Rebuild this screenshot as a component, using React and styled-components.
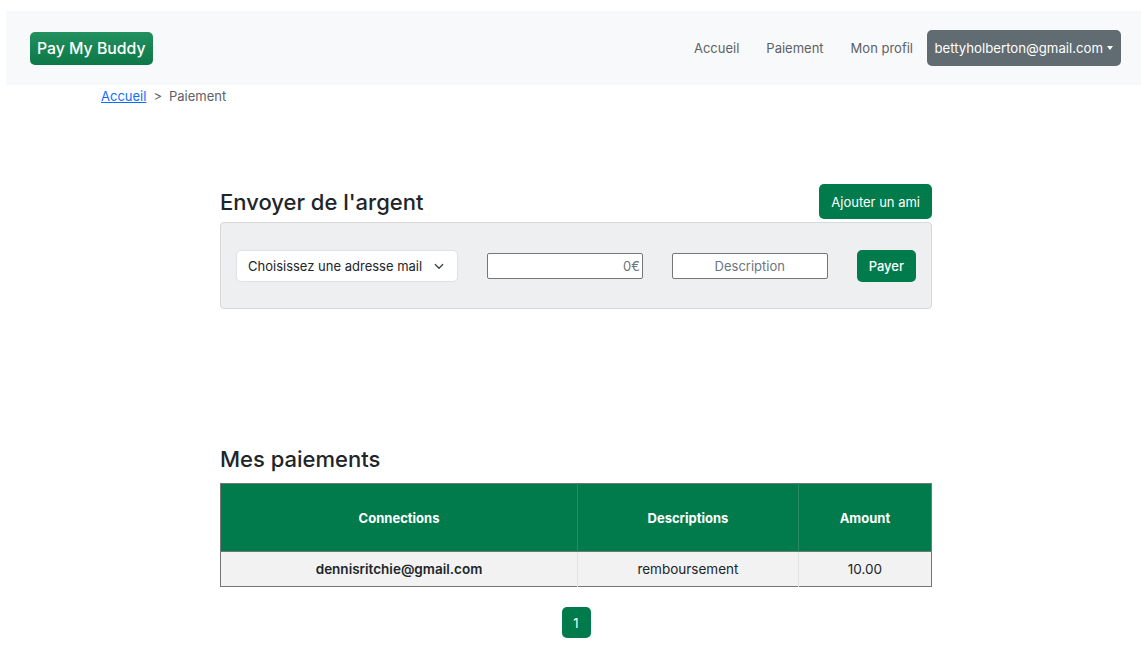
import React from 'react';
import styled, { createGlobalStyle } from 'styled-components';

const GlobalStyle = createGlobalStyle`
  body {
    margin: 0;
    background: #fff;
    font-family: Inter, "Liberation Sans", Arial, sans-serif;
    color: #212529;
  }
`;

const Page = styled.div`
  padding: 11px 0 0 6px;
`;

const Navbar = styled.nav`
  display: flex;
  align-items: center;
  justify-content: space-between;
  height: 74px;
  padding: 0 20px 0 24px;
  background-color: #f8f9fa;
`;

const Brand = styled.a`
  display: flex;
  align-items: center;
  height: 33px;
  padding: 0 7px;
  border-radius: 5px;
  background: linear-gradient(#23905f, #0d7848);
  color: #fff;
  font-size: 15.8px;
  font-weight: 500;
  text-decoration: none;
`;

const NavLinks = styled.div`
  display: flex;
  align-items: center;
`;

const NavLink = styled.a`
  padding: 0 13.5px;
  color: #5c6166;
  font-size: 13px;
  text-decoration: none;
`;

const UserButton = styled.button`
  display: flex;
  align-items: center;
  gap: 4px;
  height: 36px;
  padding: 0 8px;
  border: none;
  border-radius: 5px;
  background-color: #616b72;
  color: #fff;
  font-family: inherit;
  font-size: 13.2px;
`;

const Caret = styled.span`
  width: 0;
  height: 0;
  border-left: 3.5px solid transparent;
  border-right: 3.5px solid transparent;
  border-top: 4px solid #fff;
`;

const Breadcrumb = styled.div`
  display: flex;
  gap: 7px;
  margin-top: 1px;
  padding-left: 95px;
  height: 21px;
  line-height: 21px;
  font-size: 13px;
  color: #5c6166;
`;

const Crumb = styled.a`
  color: #0d6efd;
  text-decoration: underline;
`;

const Main = styled.main`
  width: 712px;
  margin-left: 214px;
`;

const SectionHead = styled.div`
  display: flex;
  align-items: flex-end;
  justify-content: space-between;
  margin-top: ${(p) => p.$top}px;
  margin-bottom: ${(p) => p.$bottom}px;
`;

const Title = styled.h2`
  margin: 0 0 ${(p) => p.$lift || 0}px;
  font-size: 22px;
  font-weight: 500;
  line-height: 28px;
  color: #212529;
`;

const GreenButton = styled.button`
  height: ${(p) => p.$h || 32}px;
  padding: 0 ${(p) => p.$px || 12}px;
  border: none;
  border-radius: 5px;
  background-color: #017b4c;
  color: #fff;
  font-family: inherit;
  font-size: 13px;
  font-weight: ${(p) => p.$weight || 400};
`;

const Panel = styled.form`
  display: flex;
  align-items: center;
  justify-content: space-between;
  height: 87px;
  padding: 1px 15px 0;
  border: 1px solid #d6d8da;
  border-radius: 4px;
  background-color: #eeeff1;
  box-sizing: border-box;
`;

const Select = styled.div`
  display: flex;
  align-items: center;
  justify-content: space-between;
  width: 222px;
  height: 32px;
  padding: 0 12px 0 11px;
  box-sizing: border-box;
  border: 1px solid #dee2e6;
  border-radius: 5px;
  background-color: #fff;
  font-size: 13px;
  white-space: nowrap;
  color: #212529;
`;

const Field = styled.input`
  width: 156px;
  height: 26px;
  padding: 0 2px;
  box-sizing: border-box;
  border: 1px solid #767676;
  border-radius: 2px;
  background: #fff;
  font-family: inherit;
  font-size: 13px;
  color: #6c757d;
  text-align: ${(p) => p.$align};
  &::placeholder {
    color: #6c757d;
  }
`;

const Table = styled.table`
  width: 712px;
  border-collapse: collapse;
  border: 1px solid #767676;
  font-size: 13px;
  text-align: center;
`;

const Th = styled.th`
  width: ${(p) => p.$w}px;
  height: 67px;
  padding: 0;
  background-color: #017b4c;
  color: #fff;
  font-weight: 700;
  border-left: 1px solid #2b8862;
  &:first-child {
    border-left: none;
  }
`;

const Td = styled.td`
  height: 34px;
  padding: 0;
  background-color: #f2f2f2;
  border-top: 1px solid #6f7a74;
  border-left: 1px solid #e2e2e2;
  font-size: 13.5px;
  font-weight: ${(p) => (p.$bold ? 600 : 400)};
  &:first-child {
    border-left: none;
  }
`;

const Pager = styled.div`
  display: flex;
  justify-content: center;
  margin-top: 20px;
`;

const PageButton = styled.button`
  width: 29px;
  height: 31px;
  border: none;
  border-radius: 5px;
  background-color: #017b4c;
  color: #fff;
  font-family: inherit;
  font-size: 13px;
`;

const Chevron = () => (
  <svg width="12" height="12" viewBox="0 0 16 16" fill="none">
    <path d="M3 6l5 5 5-5" stroke="#343a40" strokeWidth="1.6" strokeLinecap="round" strokeLinejoin="round" />
  </svg>
);

const App = () => (
  <>
    <GlobalStyle />
    <Page>
      <Navbar>
        <Brand href="#">Pay My Buddy</Brand>
        <NavLinks>
          <NavLink href="#">Accueil</NavLink>
          <NavLink href="#">Paiement</NavLink>
          <NavLink href="#">Mon profil</NavLink>
          <UserButton>
            bettyholberton@gmail.com
            <Caret />
          </UserButton>
        </NavLinks>
      </Navbar>
      <Breadcrumb>
        <Crumb href="#">Accueil</Crumb>
        <span>&gt;</span>
        <span>Paiement</span>
      </Breadcrumb>
      <Main>
        <SectionHead $top={77} $bottom={3}>
          <Title $lift={3}>Envoyer de l'argent</Title>
          <GreenButton $h={35}>Ajouter un ami</GreenButton>
        </SectionHead>
        <Panel>
          <Select>
            <span>Choisissez une adresse mail</span>
            <Chevron />
          </Select>
          <Field $align="right" defaultValue="0€" />
          <Field $align="center" placeholder="Description" />
          <GreenButton $px={12} $weight={500}>Payer</GreenButton>
        </Panel>
        <SectionHead $top={136} $bottom={10}>
          <Title>Mes paiements</Title>
        </SectionHead>
        <Table>
          <thead>
            <tr>
              <Th $w={358}>Connections</Th>
              <Th $w={221}>Descriptions</Th>
              <Th $w={133}>Amount</Th>
            </tr>
          </thead>
          <tbody>
            <tr>
              <Td $bold>dennisritchie@gmail.com</Td>
              <Td>remboursement</Td>
              <Td>10.00</Td>
            </tr>
          </tbody>
        </Table>
        <Pager>
          <PageButton>1</PageButton>
        </Pager>
      </Main>
    </Page>
  </>
);

export default App;
